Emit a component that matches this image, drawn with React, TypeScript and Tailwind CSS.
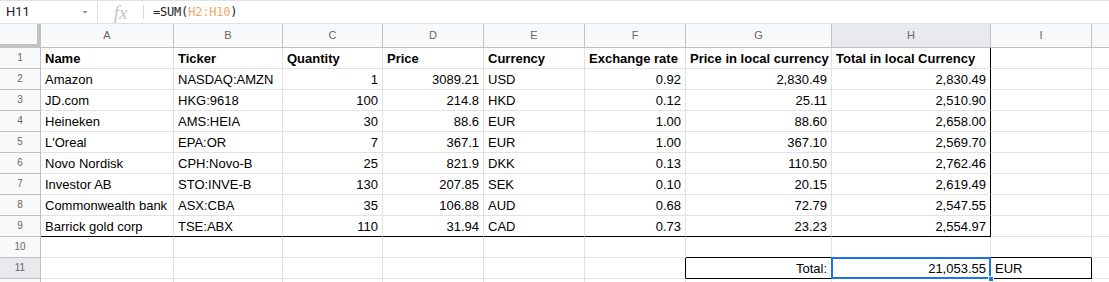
import React from 'react';

const colW = ['w-[133px]', 'w-[109px]', 'w-[100px]', 'w-[101px]', 'w-[101px]', 'w-[101px]', 'w-[146px]', 'w-[159px]', 'w-[101px]'];
const letters = ['A', 'B', 'C', 'D', 'E', 'F', 'G', 'H', 'I'];

// right aligned columns: quantity, price, rate, local price, total
const rightCols = [2, 3, 5, 6, 7];

const rows: string[][] = [
  ['Amazon', 'NASDAQ:AMZN', '1', '3089.21', 'USD', '0.92', '2,830.49', '2,830.49'],
  ['JD.com', 'HKG:9618', '100', '214.8', 'HKD', '0.12', '25.11', '2,510.90'],
  ['Heineken', 'AMS:HEIA', '30', '88.6', 'EUR', '1.00', '88.60', '2,658.00'],
  ["L'Oreal", 'EPA:OR', '7', '367.1', 'EUR', '1.00', '367.10', '2,569.70'],
  ['Novo Nordisk', 'CPH:Novo-B', '25', '821.9', 'DKK', '0.13', '110.50', '2,762.46'],
  ['Investor AB', 'STO:INVE-B', '130', '207.85', 'SEK', '0.10', '20.15', '2,619.49'],
  ['Commonwealth bank', 'ASX:CBA', '35', '106.88', 'AUD', '0.68', '72.79', '2,547.55'],
  ['Barrick gold corp', 'TSE:ABX', '110', '31.94', 'CAD', '0.73', '23.23', '2,554.97'],
];

const headers = ['Name', 'Ticker', 'Quantity', 'Price', 'Currency', 'Exchange rate', 'Price in local currency', 'Total in local Currency'];

const RowNum = ({ n, active }: { n?: number; active?: boolean }) => (
  <div
    className={`w-[41px] h-[21px] shrink-0 border-r border-b border-[#c0c0c0] text-[10px] leading-[20px] text-center text-[#666] ${
      active ? 'bg-[#e8eaed]' : 'bg-[#f8f9fa]'
    }`}
  >
    {n}
  </div>
);

const Cell = ({
  i,
  children,
  right,
  bold,
  extra = '',
}: {
  i: number;
  children?: React.ReactNode;
  right?: boolean;
  bold?: boolean;
  extra?: string;
}) => (
  <div
    className={`${colW[i]} h-[21px] shrink-0 border-r border-b border-[#e2e2e3] px-[4px] text-[13px] leading-[21px] text-black whitespace-nowrap overflow-hidden ${
      right ? 'text-right' : ''
    } ${bold ? 'font-bold' : ''} ${extra}`}
  >
    {children}
  </div>
);

const Filler = () => <div className="flex-1 h-[21px] border-b border-[#e2e2e3]" />;

export default function App() {
  return (
    <div className="w-[1109px] h-[282px] overflow-hidden bg-white font-['Liberation_Sans',Arial,sans-serif]">
      {/* formula bar */}
      <div className="h-[24px] flex items-center border-t border-b border-[#e0e0e0]">
        <div className="w-[98px] h-full flex items-center justify-between pl-[6px] pr-[6px] border-r border-[#e0e0e0]">
          <span className="text-[13px] text-[#202124] font-['Roboto',sans-serif]">H11</span>
          <svg width="8" height="8" viewBox="0 0 8 8" className="mr-[2px]">
            <path d="M1.5 3 L4 5.5 L6.5 3 Z" fill="#888" />
          </svg>
        </div>
        <div className="w-[45px] h-full flex items-center justify-center">
          <span className="text-[19px] italic text-[#c4c4c4] font-['Liberation_Serif',serif] leading-none">fx</span>
        </div>
        <div className="w-px h-[14px] bg-[#dadada]" />
        <div className="pl-[9px] text-[12px] text-[#202124] font-['DejaVu_Sans_Mono',monospace] tracking-[-0.2px]">
          =SUM(<span className="text-[#f0a66a]">H2:H10</span>)
        </div>
      </div>

      {/* column headers */}
      <div className="flex h-[24px]">
        <div className="w-[41px] shrink-0 h-full bg-[#f8f9fa] border-r-4 border-b-4 border-[#c2c2c2]" />
        {letters.map((l, i) => (
          <div
            key={l}
            className={`${colW[i]} shrink-0 h-full border-r border-b border-[#c0c0c0] text-[11px] leading-[23px] text-center text-[#666] ${
              l === 'H' ? 'bg-[#e8eaed]' : 'bg-[#f8f9fa]'
            }`}
          >
            {l}
          </div>
        ))}
        <div className="flex-1 h-full bg-[#f8f9fa] border-b border-[#c0c0c0]" />
      </div>

      {/* row 1 */}
      <div className="flex">
        <RowNum n={1} />
        {headers.map((h, i) => (
          <Cell key={h} i={i} bold extra={i === 7 ? 'border-r-black' : ''}>
            {h}
          </Cell>
        ))}
        <Cell i={8} />
        <Filler />
      </div>

      {rows.map((r, ri) => {
        const last = ri === rows.length - 1;
        return (
          <div className="flex" key={ri}>
            <RowNum n={ri + 2} />
            {r.map((v, i) => (
              <Cell
                key={i}
                i={i}
                right={rightCols.includes(i)}
                extra={`${i === 7 ? 'border-r-black' : ''} ${last ? 'border-b-black' : ''}`}
              >
                {v}
              </Cell>
            ))}
            <Cell i={8} />
            <Filler />
          </div>
        );
      })}

      {/* row 10 */}
      <div className="flex">
        <RowNum n={10} />
        {[0, 1, 2, 3, 4, 5].map((i) => (
          <Cell key={i} i={i} />
        ))}
        <Cell i={6} extra="border-b-black" />
        <Cell i={7} extra="border-b-black" />
        <Cell i={8} extra="border-b-black" />
        <Filler />
      </div>

      {/* row 11 */}
      <div className="flex">
        <RowNum n={11} active />
        {[0, 1, 2, 3, 4].map((i) => (
          <Cell key={i} i={i} />
        ))}
        <Cell i={5} extra="border-r-black" />
        <Cell i={6} right extra="border-b-black">
          Total:
        </Cell>
        <div className="relative">
          <Cell i={7} right extra="border-b-black">
            21,053.55
          </Cell>
          <div className="absolute -left-px -top-px right-0 bottom-0 border-2 border-[#1a73e8] pointer-events-none" />
          <div className="absolute -right-[3px] -bottom-[3px] w-[6px] h-[6px] bg-[#1a73e8] border border-white" />
        </div>
        <Cell i={8} extra="border-b-black border-r-black">
          EUR
        </Cell>
        <Filler />
      </div>

      {/* row 12, only a sliver shows */}
      <div className="flex">
        <RowNum />
        {[0, 1, 2, 3, 4, 5, 6, 7, 8].map((i) => (
          <Cell key={i} i={i} />
        ))}
        <Filler />
      </div>
    </div>
  );
}
